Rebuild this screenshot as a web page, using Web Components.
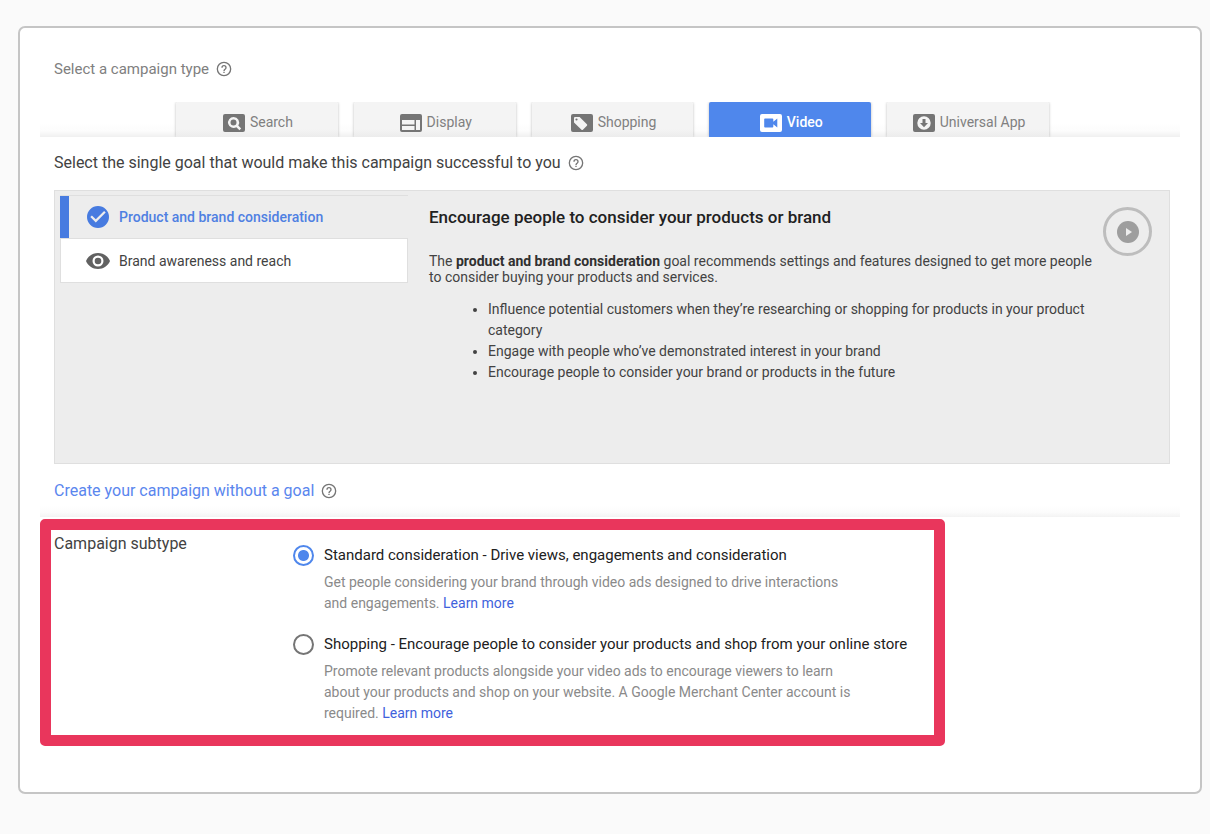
<!DOCTYPE html>
<html lang="en">
<head>
<meta charset="utf-8">
<meta name="viewport" content="width=device-width, initial-scale=1">
<title>New campaign</title>
<style>
  body {
    margin: 0;
    padding: 26px 8px 40px 18px;
    background: #fafafa;
    color: #424242;
    font-family: Roboto, "Liberation Sans", sans-serif;
    font-size: 14px;
  }
</style>
</head>
<body>
<campaign-setup>
  <section-title slot="type" muted>Select a campaign type</section-title>
  <campaign-tabs slot="tabs">
    <campaign-tab icon="search">Search</campaign-tab>
    <campaign-tab icon="display">Display</campaign-tab>
    <campaign-tab icon="shopping">Shopping</campaign-tab>
    <campaign-tab icon="video" selected>Video</campaign-tab>
    <campaign-tab icon="app">Universal App</campaign-tab>
  </campaign-tabs>

  <section-title>Select the single goal that would make this campaign successful to you</section-title>
  <goal-panel>
    <goal-item slot="goals" icon="check" selected>Product and brand consideration</goal-item>
    <goal-item slot="goals" icon="eye">Brand awareness and reach</goal-item>
    <goal-details>
      <span slot="heading">Encourage people to consider your products or brand</span>
      The <b>product and brand consideration</b> goal recommends settings and features designed to get more people to consider buying your products and services.
      <span slot="point">Influence potential customers when they’re researching or shopping for products in your product category</span>
      <span slot="point2">Engage with people who’ve demonstrated interest in your brand</span>
      <span slot="point3">Encourage people to consider your brand or products in the future</span>
    </goal-details>
  </goal-panel>
  <section-title href="#no-goal">Create your campaign without a goal</section-title>

  <campaign-subtype slot="subtype"></campaign-subtype>
</campaign-setup>

<script>
const ICONS = {
  search: `<path fill-rule="evenodd" d="M2 0h18a2 2 0 0 1 2 2v14a2 2 0 0 1-2 2H2a2 2 0 0 1-2-2V2a2 2 0 0 1 2-2zM10.500 3a5.500 5.500 0 1 0 2.900 10.200l3 3 1.800-1.800-2.900-3A5.500 5.500 0 0 0 10.500 3zm0 2.500a3 3 0 1 1 0 6 3 3 0 0 1 0-6z"/>`,
  display: `<path fill-rule="evenodd" d="M2 0h18a2 2 0 0 1 2 2v14a2 2 0 0 1-2 2H2a2 2 0 0 1-2-2V2a2 2 0 0 1 2-2zM2 6v4.500h12.500V6zM2 12v4h12.500v-4zM16 6v10h4V6z"/>`,
  shopping: `<path fill-rule="evenodd" d="M2 0h18a2 2 0 0 1 2 2v14a2 2 0 0 1-2 2H2a2 2 0 0 1-2-2V2a2 2 0 0 1 2-2zM4 3a1 1 0 0 0-1 1v4.500l7.500 7.200a1 1 0 0 0 1.400 0l4-4a1 1 0 0 0 0-1.400L8.600 3zM5.500 4.400a1.100 1.100 0 1 1 0 2.200 1.100 1.100 0 0 1 0-2.200z"/>`,
  video: `<path fill-rule="evenodd" d="M2 0h18a2 2 0 0 1 2 2v14a2 2 0 0 1-2 2H2a2 2 0 0 1-2-2V2a2 2 0 0 1 2-2zM5 4.500a.8.8 0 0 0-.8.8v7.400c0 .4.400.8.800.8h7.500c.4 0 .8-.4.800-.8V10.300l4 3.200v-9l-4 3.200V5.300a.8.8 0 0 0-.8-.8z"/>`,
  app: `<path fill-rule="evenodd" d="M2 0h18a2 2 0 0 1 2 2v14a2 2 0 0 1-2 2H2a2 2 0 0 1-2-2V2a2 2 0 0 1 2-2zM11 2.300a6.700 6.700 0 1 0 0 13.400 6.700 6.700 0 0 0 0-13.400zM9.500 5h3v4H15l-4 4.300L7 9h2.500z"/>`,
};

const GOAL_ICONS = {
  check: `<path d="M12 1a11 11 0 1 0 0 22 11 11 0 0 0 0-22zm-2.200 16.500-5.500-5.500 1.600-1.600 3.900 3.900 8.300-8.300 1.600 1.600z"/>`,
  eye: `<path d="M12 4C6.500 4 1.900 7.300 0 12c1.900 4.700 6.500 8 12 8s10.100-3.300 12-8c-1.900-4.700-6.500-8-12-8zm0 13.500a5.500 5.500 0 1 1 0-11 5.500 5.500 0 0 1 0 11zm0-8.800a3.300 3.300 0 1 0 0 6.600 3.300 3.300 0 0 0 0-6.600z"/>`,
};

class CampaignSetup extends HTMLElement {
  constructor() {
    super();
    this.attachShadow({ mode: "open" }).innerHTML = `\
<style>
  :host {
    display: block;
    box-sizing: border-box;
    border: 2px solid #c5c5c5;
    border-radius: 7px;
    background: #fff;
    padding: 28px 20px 46px;
  }
  .type { padding: 0 14px; }
  .tabs {
    margin-top: 20px;
    background: linear-gradient(to top, #f0f0f0, #fcfcfc 6px, #fff 14px);
  }
  .goal {
    display: grid;
    gap: 14px;
    padding: 13px 10px 13px 14px;
    background: linear-gradient(to top, #f3f3f3, #fcfcfc 5px, #fff 11px);
  }
  .subtype { padding-top: 2px; }
</style>
<div class="type"><slot name="type"></slot></div>
<div class="tabs"><slot name="tabs"></slot></div>
<div class="goal"><slot></slot></div>
<div class="subtype"><slot name="subtype"></slot></div>
`;
  }
}

class SectionTitle extends HTMLElement {
  constructor() {
    super();
    this.attachShadow({ mode: "open" }).innerHTML = `\
<style>
  :host {
    display: flex;
    align-items: center;
    gap: 7px;
    font-size: 16px;
    line-height: 26px;
  }
  :host([muted]) { color: #808080; font-size: 15px; }
  a { color: #5a86ee; text-decoration: none; }
  button {
    display: flex;
    padding: 0;
    border: none;
    background: none;
    color: #757575;
  }
</style>
<span id="text"><slot></slot></span>
<button type="button" aria-label="Help">
  <svg width="16" height="16" viewBox="0 0 24 24" fill="currentColor"><path d="M11 18h2v-2h-2v2zm1-17a11 11 0 1 0 0 22 11 11 0 0 0 0-22zm0 20a9 9 0 1 1 0-18 9 9 0 0 1 0 18zm0-15a4 4 0 0 0-4 4h2a2 2 0 1 1 4 0c0 2-3 1.750-3 5h2c0-2.250 3-2.500 3-5a4 4 0 0 0-4-4z"/></svg>
</button>
`;
  }

  connectedCallback() {
    if (!this.hasAttribute("href")) return;
    const link = document.createElement("a");
    link.href = this.getAttribute("href");
    link.innerHTML = "<slot></slot>";
    this.shadowRoot.getElementById("text")?.replaceWith(link);
  }
}

class CampaignTabs extends HTMLElement {
  constructor() {
    super();
    this.attachShadow({ mode: "open" }).innerHTML = `\
<style>
  :host {
    display: grid;
    grid-template-columns: repeat(5, minmax(0, 1fr));
    gap: 16px;
    padding: 0 131px 0 136px;
    overflow: hidden;
  }
</style>
<slot></slot>
`;
    this.addEventListener("click", (e) => {
      const tab = e.target.closest("campaign-tab");
      if (!tab) return;
      for (const other of this.children) {
        other.toggleAttribute("selected", other === tab);
      }
    });
  }
}

class CampaignTab extends HTMLElement {
  constructor() {
    super();
    this.attachShadow({ mode: "open" }).innerHTML = `\
<style>
  :host { display: block; }
  button {
    display: flex;
    justify-content: center;
    align-items: center;
    gap: 5px;
    width: 100%;
    height: 35px;
    padding: 4px 0 0 2px;
    border: none;
    border-radius: 2px 2px 0 0;
    background: linear-gradient(to top, #ececec, #f4f4f4 8px);
    box-shadow: 0 0 3px #0004;
    color: #808080;
    font: 14px/20px Roboto, "Liberation Sans", sans-serif;
  }
  svg { fill: #757575; margin-top: 3px; }
  :host([selected]) button {
    background: #4f87ec;
    color: #fff;
    font-weight: 500;
  }
  :host([selected]) svg { fill: #fff; }
</style>
<button type="button">
  <svg width="22" height="18" viewBox="0 0 22 18"></svg>
  <slot></slot>
</button>
`;
  }

  connectedCallback() {
    this.shadowRoot.querySelector("svg").innerHTML =
      ICONS[this.getAttribute("icon")];
  }
}

class GoalPanel extends HTMLElement {
  constructor() {
    super();
    this.attachShadow({ mode: "open" }).innerHTML = `\
<style>
  :host {
    display: grid;
    grid-template-columns: 348px minmax(0, 1fr) auto;
    align-items: start;
    box-sizing: border-box;
    min-height: 274px;
    padding: 4px 17px 4px 5px;
    border: 1px solid #dfdfdf;
    background: #ededed;
  }
  .goals { border-top: 1px solid #dfdfdf; }
  .play {
    display: grid;
    place-items: center;
    width: 49px;
    height: 49px;
    margin-top: 12px;
    padding: 0;
    border: 3px solid #bdbdbd;
    border-radius: 50%;
    background: none;
  }
</style>
<div class="goals"><slot name="goals"></slot></div>
<slot></slot>
<button class="play" type="button" aria-label="Play video">
  <svg width="22" height="22" viewBox="0 0 22 22"><circle cx="11" cy="11" r="11" fill="#9e9e9e"/><path d="M9 7v8l6-4z" fill="#ededed"/></svg>
</button>
`;
  }
}

class GoalItem extends HTMLElement {
  constructor() {
    super();
    this.attachShadow({ mode: "open" }).innerHTML = `\
<style>
  :host { display: block; }
  button {
    display: flex;
    align-items: center;
    gap: 9px;
    box-sizing: border-box;
    width: 100%;
    height: 44px;
    padding: 0 0 0 25px;
    border: 1px solid #dfdfdf;
    border-top: none;
    background: #fff;
    color: #424242;
    font: 14px/20px Roboto, "Liberation Sans", sans-serif;
    text-align: left;
  }
  svg { fill: #616161; }
  :host([selected]) button {
    height: 43px;
    padding-left: 26px;
    border-width: 0 0 1px;
    background: linear-gradient(to right, #477be0 9px, transparent 9px);
    color: #4f80e2;
    font-weight: 500;
  }
  :host([selected]) svg { fill: #477be0; }
</style>
<button type="button">
  <svg width="24" height="24" viewBox="0 0 24 24"></svg>
  <slot></slot>
</button>
`;
  }

  connectedCallback() {
    this.shadowRoot.querySelector("svg").innerHTML =
      GOAL_ICONS[this.getAttribute("icon")];
  }
}

class GoalDetails extends HTMLElement {
  constructor() {
    super();
    this.attachShadow({ mode: "open" }).innerHTML = `\
<style>
  :host { display: block; padding: 12px 5px 0 21px; }
  h2 {
    margin: 0 0 26px;
    color: #212121;
    font-size: 17px;
    font-weight: 500;
    line-height: 20px;
  }
  p { margin: 0; line-height: 16px; }
  ul { margin: 14px 0 0; padding-left: 59px; line-height: 21px; }
  ::slotted(b) { color: #303030; font-weight: 700; }
</style>
<h2><slot name="heading"></slot></h2>
<p><slot></slot></p>
<ul>
  <li><slot name="point"></slot></li>
  <li><slot name="point2"></slot></li>
  <li><slot name="point3"></slot></li>
</ul>
`;
  }
}

// Both radios live in one shadow root so the browser treats them as one group.
class CampaignSubtype extends HTMLElement {
  constructor() {
    super();
    this.attachShadow({ mode: "open" }).innerHTML = `\
<style>
  :host {
    display: grid;
    grid-template-columns: 239px minmax(0, 1fr);
    box-sizing: border-box;
    width: 905px;
    max-width: 100%;
    padding: 0 3px 11px;
    border: 11px solid #e9365c;
    border-radius: 5px;
  }
  h2 {
    margin: 4px 0 0;
    font-size: 16px;
    font-weight: 400;
    line-height: 20px;
  }
  .options { display: grid; gap: 20px; padding-top: 15px; }
  .option {
    display: grid;
    grid-template-columns: 21px minmax(0, 1fr);
    column-gap: 10px;
    row-gap: 6px;
  }
  input {
    appearance: none;
    width: 21px;
    height: 21px;
    margin: 0;
    border: 2px solid #757575;
    border-radius: 50%;
  }
  input:checked {
    border-color: #4f87ec;
    background: radial-gradient(circle, #4f87ec 5px, transparent 6px);
  }
  label { color: #212121; font-size: 15px; line-height: 20px; }
  p {
    grid-column: 2;
    max-width: 534px;
    margin: 0;
    color: #8a8a8a;
    line-height: 21px;
  }
  a { color: #3f62dc; text-decoration: none; }
</style>
<h2 id="title">Campaign subtype</h2>
<div class="options" role="radiogroup" aria-labelledby="title">
  <div class="option">
    <input type="radio" name="subtype" id="standard" checked>
    <label for="standard">Standard consideration - Drive views, engagements and consideration</label>
    <p>Get people considering your brand through video ads designed to drive interactions and engagements. <a href="#standard">Learn more</a></p>
  </div>
  <div class="option">
    <input type="radio" name="subtype" id="shopping">
    <label for="shopping">Shopping - Encourage people to consider your products and shop from your online store</label>
    <p>Promote relevant products alongside your video ads to encourage viewers to learn about your products and shop on your website. A Google Merchant Center account is required. <a href="#shopping">Learn more</a></p>
  </div>
</div>
`;
  }
}

customElements.define("campaign-setup", CampaignSetup);
customElements.define("section-title", SectionTitle);
customElements.define("campaign-tabs", CampaignTabs);
customElements.define("campaign-tab", CampaignTab);
customElements.define("goal-panel", GoalPanel);
customElements.define("goal-item", GoalItem);
customElements.define("goal-details", GoalDetails);
customElements.define("campaign-subtype", CampaignSubtype);
</script>
</body>
</html>
